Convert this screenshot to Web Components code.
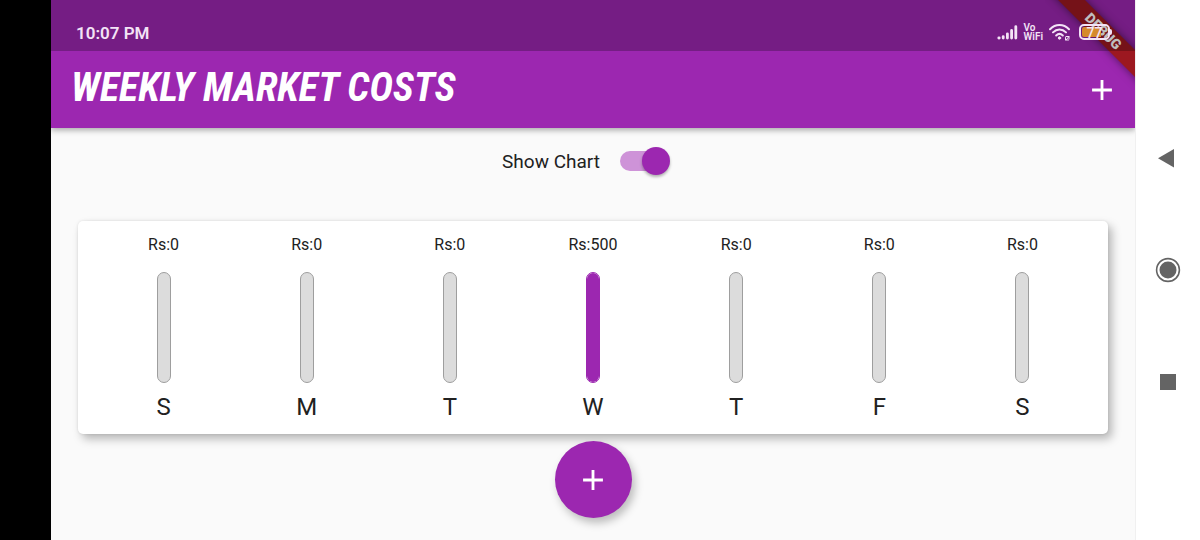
<!DOCTYPE html>
<html lang="en">
<head>
<meta charset="utf-8">
<meta name="viewport" content="width=device-width, initial-scale=1">
<title>Weekly Market Costs</title>
<style>
  body { margin: 0; font-family: Roboto, "Liberation Sans", sans-serif; color: #212121; background: #000; }
</style>
</head>
<body>
<phone-frame>
  <debug-banner slot="header">DEBUG</debug-banner>
  <status-bar slot="header" time="10:07 PM" battery="77"></status-bar>
  <app-bar slot="header">Weekly Market Costs</app-bar>
  <chart-switch>Show Chart</chart-switch>
  <cost-chart>
    <chart-bar day="S" amount="0"></chart-bar>
    <chart-bar day="M" amount="0"></chart-bar>
    <chart-bar day="T" amount="0"></chart-bar>
    <chart-bar day="W" amount="500" share="100"></chart-bar>
    <chart-bar day="T" amount="0"></chart-bar>
    <chart-bar day="F" amount="0"></chart-bar>
    <chart-bar day="S" amount="0"></chart-bar>
  </cost-chart>
  <add-fab></add-fab>
  <system-nav slot="nav"></system-nav>
</phone-frame>
<script>
const define = (name, render) => customElements.define(name, class extends HTMLElement {
  constructor() {
    super();
    this.attachShadow({ mode: 'open' }).innerHTML = render(this);
  }
});
const plus = size => `<svg width="${size}" height="${size}" viewBox="0 0 24 24" aria-hidden="true"><path fill="#fff" d="M19 13h-6v6h-2v-6H5v-2h6V5h2v6h6z"/></svg>`;

define('phone-frame', () => `
  <style>
    :host { display: grid; grid-template-columns: 51px 1fr 65px; min-height: 100vh; background: #000; }
    .app { grid-column: 2; display: flex; flex-direction: column; background: #fafafa; min-width: 0; }
    header { position: relative; overflow: hidden; background: #9c27b0; }
    .top { box-shadow: 0 2px 6px rgba(0,0,0,.35); clip-path: inset(0 0 -12px 0); }
    main { flex: 1; display: flex; flex-direction: column; align-items: center; padding: 13px 27px 22px; }
    ::slotted(cost-chart) { align-self: stretch; margin-top: 40px; }
    ::slotted(add-fab) { margin-top: auto; }
  </style>
  <div class="app">
    <div class="top"><header><slot name="header"></slot></header></div>
    <main><slot></slot></main>
  </div>
  <slot name="nav"></slot>`);

define('debug-banner', () => `
  <style>
    :host { position: absolute; top: 0; right: 0; width: 90px; height: 90px; overflow: hidden; }
    div { position: absolute; top: 22px; left: -12px; width: 140px; height: 19px; line-height: 19px;
      transform: rotate(45deg); text-align: center; font-size: 14px; font-weight: 900; color: #fff;
      background: #9c1820; box-shadow: 0 0 8px rgba(0,0,0,.5); }
  </style>
  <div><slot></slot></div>`);

define('status-bar', el => `
  <style>
    :host { position: relative; display: flex; align-items: center; height: 51px; box-sizing: border-box;
      padding: 14px 23px 0 25px; background: rgba(0,0,0,.25); color: #f3e3f6; }
    .time { flex: 1; font-size: 17px; font-weight: 600; line-height: 20px; }
    .icons { display: flex; align-items: center; gap: 6px; padding-bottom: 2px; }
    .vo { font: 600 10px/9px Roboto, "Liberation Sans", sans-serif; }
    .battery { display: grid; place-items: center; box-sizing: border-box; width: 31px; height: 16px; margin-left: 3px;
      border: 2px solid #f3e3f6; border-radius: 5px; font-size: 14px; line-height: 12px; font-weight: 500;
      background: linear-gradient(90deg, #d58a2c 75%, transparent 75%) content-box; padding: 1px; }
    .cell { display: flex; align-items: center; }
    .cell::after { content: ""; width: 2px; height: 6px; border-radius: 0 2px 2px 0; background: #f3e3f6; }
    svg { display: block; }
  </style>
  <span class="time">${el.getAttribute('time')}</span>
  <div class="icons">
    <svg width="21" height="16" viewBox="0 0 21 16" stroke="#f3e3f6" stroke-width="2.800" stroke-linecap="round"><path d="M1.800 14h.4M6.200 14v-1.400M10.400 14V9.800M14.600 14V6.400M18.800 14V2.600"/></svg>
    <div class="vo">Vo<br>WiFi</div>
    <svg width="21" height="18" viewBox="0 0 21 18" fill="none" stroke="#f3e3f6" stroke-width="2" stroke-linecap="round"><path d="M1 6.200C6.500 .6 14.500 .6 20 6.200M4 9.400c3.800-3.900 9.200-3.900 13 0M7.200 12.500c2-2 4.600-2 6.600 0"/><circle cx="10.500" cy="15" r="1.200" fill="#f3e3f6" stroke-width="1"/><path d="M17 13.500h3v2.500M16.500 14.500V17h3M17 17l3-3.500" stroke-width="1"/></svg>
    <div class="cell"><div class="battery">${el.getAttribute('battery')}</div></div>
  </div>`);

define('app-bar', () => `
  <style>
    :host { display: flex; align-items: center; height: 77px; box-sizing: border-box; padding: 0 16px 0 20px; color: #fff; }
    h1 { flex: 1; margin: 0; padding-bottom: 4px; font: italic 700 40px/48px "Liberation Sans Narrow", "Roboto Condensed", Roboto, sans-serif;
      text-transform: uppercase; white-space: nowrap; }
    button { display: grid; place-items: center; padding: 0; border: 0; background: none; cursor: pointer; }
  </style>
  <h1><slot></slot></h1>
  <button type="button" aria-label="Add cost">${plus(34)}</button>`);

define('chart-switch', () => `
  <style>
    :host { display: block; }
    label { display: flex; align-items: center; gap: 20px; height: 40px; padding-right: 14px; font-size: 19px; }
    input { appearance: none; display: grid; align-items: center; width: 50px; height: 28px; margin: 0; cursor: pointer; }
    input::before, input::after { content: ""; grid-area: 1 / 1; }
    input::before { width: 46px; height: 20px; border-radius: 10px; background: #bdbdbd; }
    input::after { width: 28px; height: 28px; border-radius: 50%; background: #fafafa; box-shadow: 0 2px 3px rgba(0,0,0,.3); }
    input:checked::before { background: #ce93d8; }
    input:checked::after { justify-self: end; background: #9c27b0; }
  </style>
  <label><slot></slot><input type="checkbox" role="switch" checked></label>`);

define('cost-chart', () => `
  <style>
    :host { display: grid; grid-template-columns: repeat(7, 1fr); padding: 13px 14px 12px; border-radius: 5px;
      background: #fff; box-shadow: 4px 5px 10px rgba(0,0,0,.27), 0 0 3px rgba(0,0,0,.1); }
  </style>
  <slot></slot>`);

define('chart-bar', el => `
  <style>
    :host { display: flex; flex-direction: column; align-items: center; }
    .amount { font-size: 16px; line-height: 22px; }
    .track { display: flex; align-items: flex-end; box-sizing: border-box; width: 14px; height: 111px; margin: 16px 0 9px;
      border: 1px solid #9e9e9e; border-radius: 7px; background: #dcdcdc; overflow: hidden; }
    .track.full { border-color: #9c27b0; background: #9c27b0; }
    .fill { width: 100%; height: ${el.getAttribute('share') || 0}%; background: #9c27b0; }
    .day { font-size: 24px; line-height: 30px; }
  </style>
  <span class="amount">Rs:${el.getAttribute('amount')}</span>
  <div class="track ${el.getAttribute('share') === '100' ? 'full' : ''}"><div class="fill"></div></div>
  <span class="day">${el.getAttribute('day')}</span>`);

define('add-fab', () => `
  <style>
    :host { display: block; }
    button { display: grid; place-items: center; width: 77px; height: 77px; padding: 0; border: 0; border-radius: 50%;
      background: #9c27b0; box-shadow: 3px 5px 9px rgba(0,0,0,.25); cursor: pointer; }
  </style>
  <button type="button" aria-label="Add new cost">${plus(34)}</button>`);

define('system-nav', () => `
  <style>
    :host { display: flex; flex-direction: column; justify-content: center; align-items: center; gap: 84px;
      box-sizing: border-box; background: #fff; border-left: 1px solid #f0f0f0; }
    button { display: grid; place-items: center; width: 28px; height: 28px; padding: 0; border: 0; background: none; cursor: pointer; }
    svg { fill: #646464; }
  </style>
  <button type="button" aria-label="Back"><svg width="28" height="28" viewBox="0 0 28 28"><path d="M4 14.200L20 5v18.500z"/></svg></button>
  <button type="button" aria-label="Home"><svg width="28" height="28" viewBox="0 0 28 28"><circle cx="14" cy="14" r="8.500"/><circle cx="14" cy="14" r="11.400" fill="none" stroke="#646464" stroke-width="1.600"/></svg></button>
  <button type="button" aria-label="Recent apps"><svg width="28" height="28" viewBox="0 0 28 28"><path d="M6 6h16v16H6z"/></svg></button>`);
</script>
</body>
</html>
